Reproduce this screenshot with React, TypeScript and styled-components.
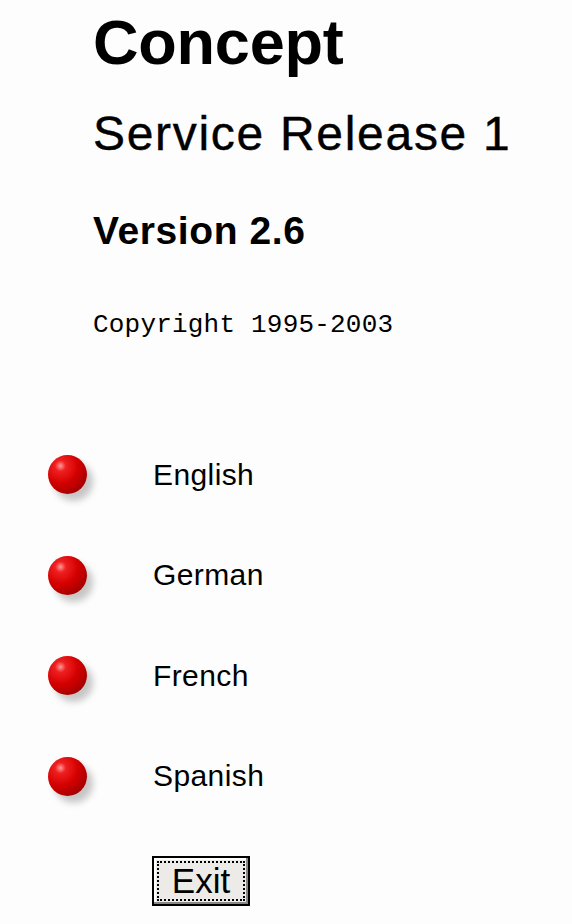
import React from "react";
import styled, { createGlobalStyle } from "styled-components";

const Global = createGlobalStyle`
  html, body { margin: 0; padding: 0; background: #fdfdfd; }
  body { width: 572px; height: 924px; overflow: hidden; }
`;

const Page = styled.div`
  width: 572px;
  height: 924px;
  background: #fdfdfd;
  display: flex;
  flex-direction: column;
  font-family: "Liberation Sans", Arial, sans-serif;
  color: #000;
`;

const Header = styled.div`
  display: flex;
  flex-direction: column;
  padding-left: 93px;
`;

const Title = styled.h1`
  margin: 6px 0 0 0;
  font-size: 63px;
  line-height: 72px;
  font-weight: 700;
  letter-spacing: -0.2px;
`;

const Subtitle = styled.h2`
  margin: 30px 0 0 0;
  font-size: 48px;
  line-height: 52px;
  font-weight: 400;
  letter-spacing: 1.7px;
  -webkit-text-stroke: 0.4px #000;
`;

const Version = styled.h3`
  margin: 49px 0 0 0;
  font-size: 39px;
  line-height: 44px;
  font-weight: 700;
  letter-spacing: 0.6px;
`;

const Copyright = styled.div`
  margin-top: 57px;
  font-family: "Liberation Mono", "Courier New", monospace;
  font-size: 26px;
  line-height: 30px;
  letter-spacing: 0.2px;
`;

const LanguageList = styled.ul`
  list-style: none;
  margin: 115px 0 0 0;
  padding: 0 0 0 48px;
  display: flex;
  flex-direction: column;
  gap: 61.5px;
`;

const LanguageItem = styled.li`
  display: flex;
  align-items: center;
  height: 39px;
`;

const Ball = styled.span`
  width: 39px;
  height: 39px;
  flex: none;
  border-radius: 50%;
  background: radial-gradient(
    circle at 32% 28%,
    #ff9a9a 0%,
    #f02020 14%,
    #d40000 45%,
    #a00000 80%,
    #7a0000 100%
  );
  box-shadow: 6px 7px 7px rgba(0, 0, 0, 0.22);
`;

const LanguageLabel = styled.span`
  margin-left: 66px;
  font-size: 30px;
  font-weight: 400;
  letter-spacing: 0.4px;
`;

const ExitRow = styled.div`
  margin-top: 60px;
  padding-left: 152px;
  display: flex;
`;

const ExitButton = styled.button`
  width: 98px;
  height: 50px;
  padding: 3px;
  box-sizing: border-box;
  border: 2px solid #000;
  background: #ecebe8;
  box-shadow: inset -2px -2px 0 #888, inset 2px 2px 0 #fff;
  display: flex;
  cursor: pointer;
`;

const FocusRing = styled.span`
  flex: 1;
  border: 2px dotted #000;
  display: flex;
  align-items: center;
  justify-content: center;
  font-family: "Liberation Sans", Arial, sans-serif;
  font-size: 35px;
  line-height: 1;
  color: #000;
`;

const languages = ["English", "German", "French", "Spanish"];

export default function App() {
  return (
    <>
      <Global />
      <Page>
        <Header>
          <Title>Concept</Title>
          <Subtitle>Service Release 1</Subtitle>
          <Version>Version 2.6</Version>
          <Copyright>Copyright 1995-2003</Copyright>
        </Header>
        <LanguageList>
          {languages.map((l) => (
            <LanguageItem key={l}>
              <Ball />
              <LanguageLabel>{l}</LanguageLabel>
            </LanguageItem>
          ))}
        </LanguageList>
        <ExitRow>
          <ExitButton>
            <FocusRing>Exit</FocusRing>
          </ExitButton>
        </ExitRow>
      </Page>
    </>
  );
}
